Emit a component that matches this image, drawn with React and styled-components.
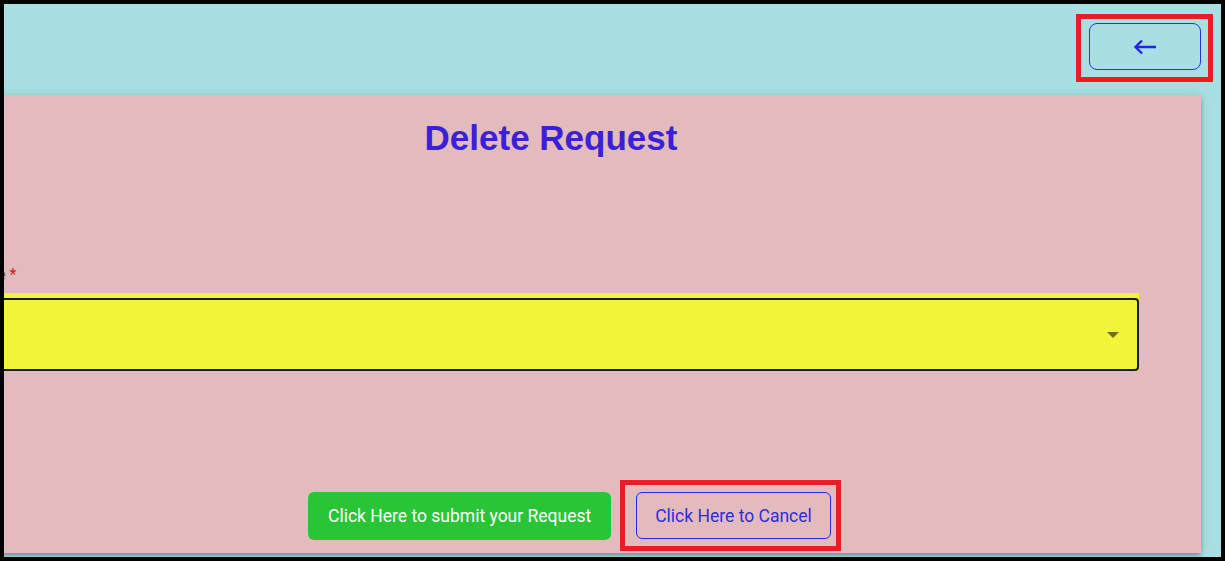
import React from "react";
import styled, { createGlobalStyle, css } from "styled-components";

const Global = createGlobalStyle`
  html, body { margin: 0; padding: 0; background: #000; }
  body { font-family: Roboto, "Noto Sans", sans-serif; }
  * { box-sizing: border-box; }
`;

const Frame = styled.div`
  margin: 4px;
  width: 1217px;
  height: 553px;
  background: #a7dfe3;
  overflow: hidden;
`;

const TopBar = styled.div`
  display: flex;
  justify-content: flex-end;
  padding: 19px 20px 0 0;
`;

const highlight = (t, r, b, l) => css`
  position: relative;
  &::after {
    content: "";
    position: absolute;
    top: ${t}px;
    right: ${r}px;
    bottom: ${b}px;
    left: ${l}px;
    border: 5px solid #ed1c24;
    pointer-events: none;
  }
`;

const BackButton = styled.button`
  ${highlight(-10, -13, -13, -14)}
  width: 112px;
  height: 47px;
  border: 1px solid #2b33e3;
  border-radius: 8px;
  background: transparent;
  display: flex;
  align-items: center;
  justify-content: center;
  padding: 0;
  cursor: pointer;
`;

const Card = styled.div`
  display: flow-root;
  margin-top: 25px;
  margin-left: -103px;
  width: 1300px;
  background: #e3bbbc;
  padding: 0 62px 13px 62px;
  box-shadow: 0 2px 4px -1px rgba(0, 0, 0, 0.2), 0 4px 5px 0 rgba(0, 0, 0, 0.14),
    0 1px 10px 0 rgba(0, 0, 0, 0.12);
`;

const Title = styled.h1`
  margin: 23px 0 0;
  font-family: "Liberation Sans", Arial, sans-serif;
  font-weight: 700;
  font-size: 35px;
  line-height: 40px;
  color: #3a21d7;
  text-align: center;
`;

const Field = styled.div`
  margin-top: 107px;
  display: flex;
  flex-direction: column;
`;

const Label = styled.label`
  font-family: Roboto, sans-serif;
  font-size: 16px;
  line-height: 19px;
  color: rgba(0, 0, 0, 0.6);
  white-space: nowrap;
`;

const Required = styled.span`
  color: #e0141c;
`;

const SelectWrap = styled.div`
  margin-top: 9px;
  background: #f2f437;
  padding-top: 5px;
`;

const Outline = styled.div`
  height: 73px;
  border: 2px solid #1b1b16;
  border-radius: 4px;
  display: flex;
  align-items: center;
  justify-content: flex-end;
  padding-right: 18px;
`;

const Buttons = styled.div`
  margin-top: 121px;
  display: flex;
  gap: 25px;
  padding-left: 345px;
`;

const ActionButton = styled.button`
  height: ${(p) => (p.$outlined ? 47 : 48)}px;
  border-radius: 6px;
  font-family: Roboto, sans-serif;
  font-size: 17.5px;
  font-weight: 400;
  cursor: pointer;
  white-space: nowrap;
  ${(p) =>
    p.$outlined
      ? css`
          ${highlight(-13, -11, -13, -17)}
          padding: 0 18px;
          background: transparent;
          border: 1px solid #2a2ae2;
          color: #2c2ee0;
        `
      : css`
          padding: 0 20px;
          background: #29c537;
          border: none;
          color: #fff;
        `}
`;

export default function App() {
  return (
    <>
      <Global />
      <Frame>
        <TopBar>
          <BackButton aria-label="Back">
            <svg width="24" height="16" viewBox="0 0 24 16">
              <path
                d="M23 8H2.5M9 1.5L2.5 8L9 14.5"
                fill="none"
                stroke="#2424e6"
                strokeWidth="2.4"
                strokeLinecap="butt"
                strokeLinejoin="miter"
              />
            </svg>
          </BackButton>
        </TopBar>
        <Card>
          <Title>Delete Request</Title>
          <Field>
            <Label>
              Name <Required>*</Required>
            </Label>
            <SelectWrap>
              <Outline>
                <svg width="12" height="6" viewBox="0 0 12 6">
                  <path d="M0 0h12L6 6z" fill="rgba(0,0,0,0.54)" />
                </svg>
              </Outline>
            </SelectWrap>
          </Field>
          <Buttons>
            <ActionButton>Click Here to submit your Request</ActionButton>
            <ActionButton $outlined>Click Here to Cancel</ActionButton>
          </Buttons>
        </Card>
      </Frame>
    </>
  );
}
